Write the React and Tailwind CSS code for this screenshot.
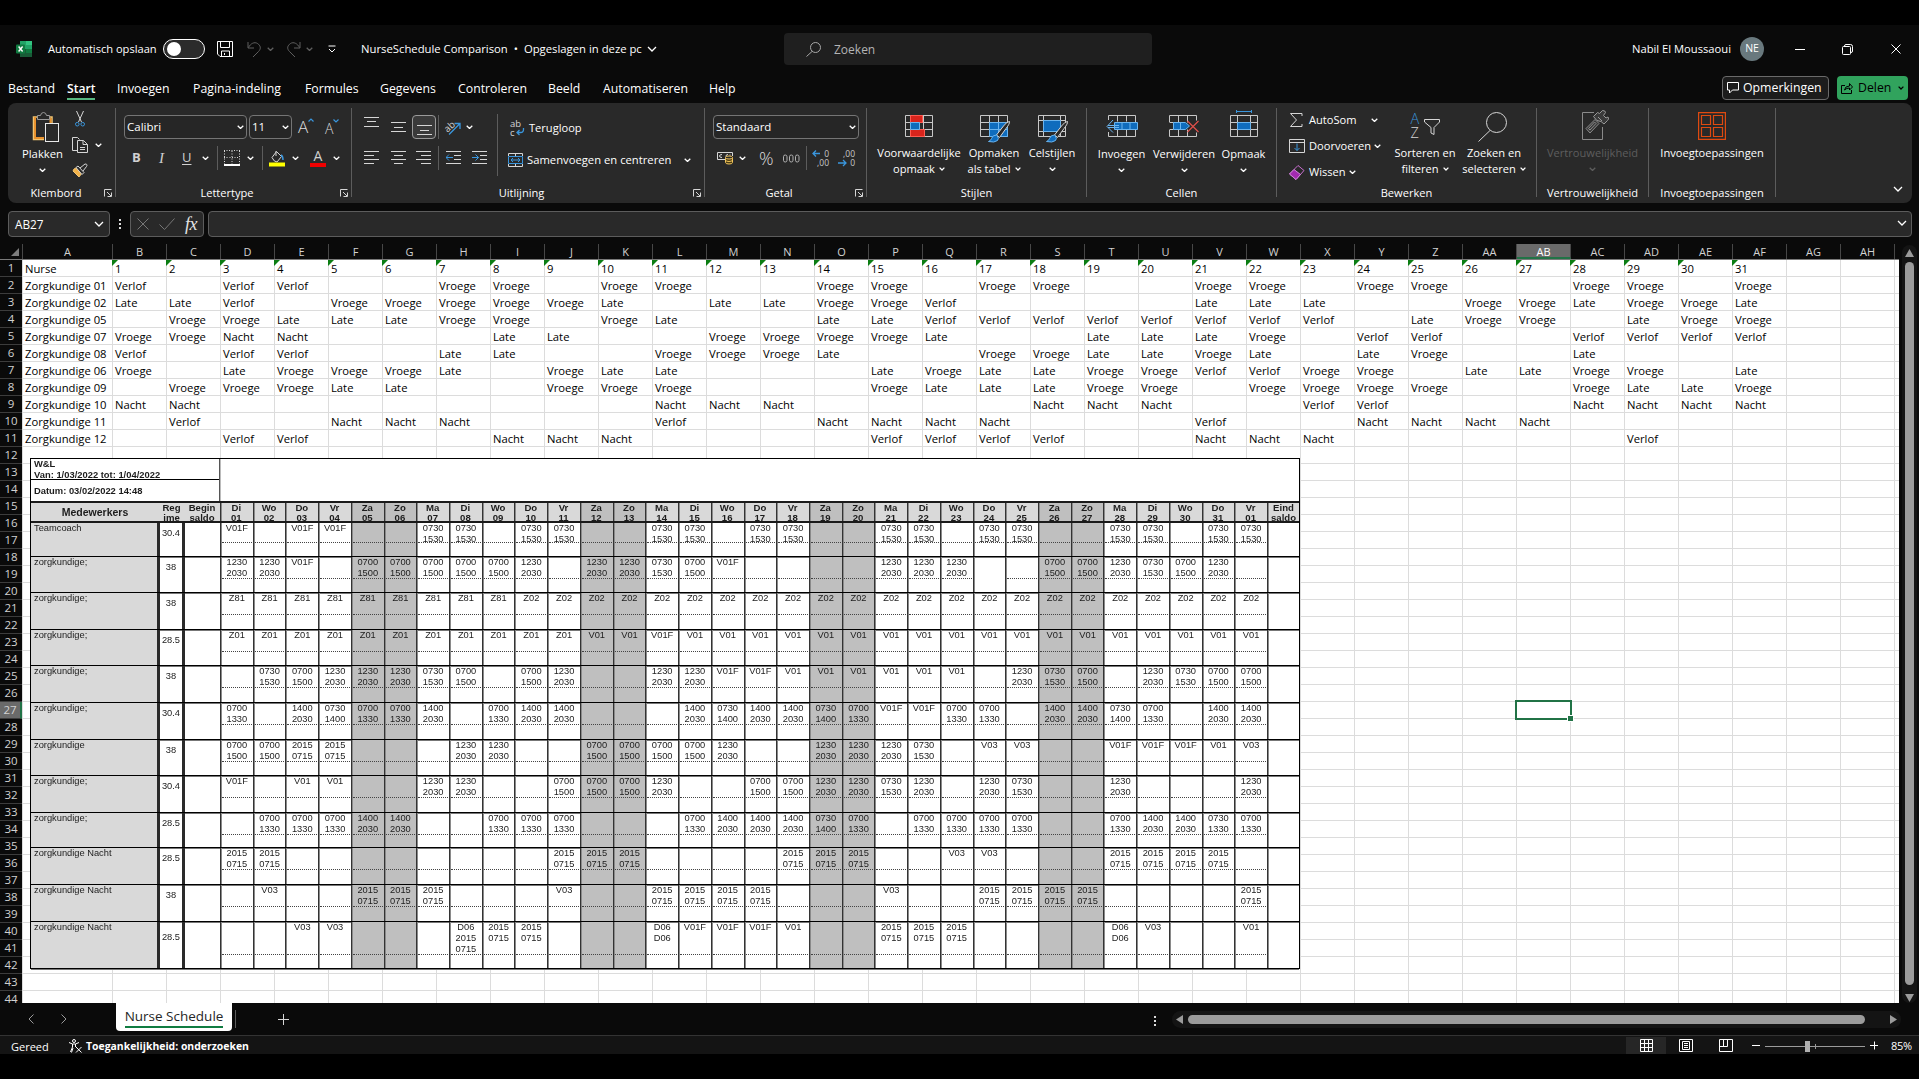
import React from "react";

/* ---------- data ---------- */

const WORDS = { V: "Vroege", F: "Verlof", L: "Late", N: "Nacht" };

const NURSES = [
  ["Zorgkundige 01", "F.FF..VV.VV..VV.VV..VV.VV..VV.V"],
  ["Zorgkundige 02", "LLF.VVVVVL.LLVVF....LLL..VVLVVL"],
  ["Zorgkundige 05", ".VVLLLVV.VL..LLFFFFFFFF.LVV.LVV"],
  ["Zorgkundige 07", "VVNN...LL..VVVVL..LLLV.FF..FFFF"],
  ["Zorgkundige 08", "F.FF..LL..VVVL..VVLLVL.LV..L..."],
  ["Zorgkundige 06", "V.LVVVL.VLL...LVLLVVFFVV.LLVV.L"],
  ["Zorgkundige 09", ".VVVLL..VVV...VLLLVV.VVVV..VLLV"],
  ["Zorgkundige 10", "NN........NNN....NNN..FF...NNNN"],
  ["Zorgkundige 11", ".F..NNN...F..NNNN...F..NNNN...."],
  ["Zorgkundige 12", "..FF...NNN....FFFF..NNN.....F.."],
];

const COLS = [
  ..."BCDEFGHIJKLMNOPQRSTUVWXYZ".split(""),
  "AA", "AB", "AC", "AD", "AE", "AF", "AG", "AH",
];

const SHIFT = {
  a: ["0730", "1530"],
  b: ["1230", "2030"],
  c: ["0700", "1500"],
  d: ["0700", "1330"],
  e: ["1400", "2030"],
  f: ["0730", "1400"],
  g: ["0730", "1330"],
  n: ["2015", "0715"],
  D: ["D06", "D06"],
  E: ["D06", "2015", "0715"],
  8: ["Z81"],
  2: ["Z02"],
  1: ["Z01"],
  v: ["V01"],
  F: ["V01F"],
  3: ["V03"],
};

const PLAN = [
  ["Teamcoach", "30.4", "F.FF..aa.aa..aa.aa..aa.aa..aa.aa"],
  ["zorgkundige;", "38", "bbF.cccccb.bbacF....bbb..ccbacb."],
  ["zorgkundige;", "38", "88888888822222222222222222222222"],
  ["zorgkundige;", "28.5", "11111111111vvFvvvvvvvvvvvvvvvvvv"],
  ["zorgkundige;", "38", ".acbbbac.cb..bbFFvvvvvv.bac.bacc"],
  ["zorgkundige;", "30.4", "d.efdde.dee...efeefdFFdd.eefd.ee"],
  ["zorgkundige", "38", "ccnn...bb..ccccb..bbba.33..FFFv3"],
  ["zorgkundige;", "30.4", "F.vv..bb..cccb..ccbbab.ba..b...b"],
  ["zorgkundige;", "28.5", ".dddee..ddd...deeefd.dddd..deegd"],
  ["zorgkundige Nacht", "28.5", "nn........nnn....nnn..33...nnnn."],
  ["zorgkundige Nacht", "38", ".3..nnn...3..nnnn...3..nnnn....n"],
  ["zorgkundige Nacht", "28.5", "..33...Enn...DFFFv..nnn....D3..v"],
];

const DAY_NAMES = ["Di", "Wo", "Do", "Vr", "Za", "Zo", "Ma"];
const DAYS = Array.from({ length: 32 }, (_, i) => ({
  name: DAY_NAMES[i % 7],
  num: String(i === 31 ? 1 : i + 1).padStart(2, "0"),
  weekend: i % 7 === 4 || i % 7 === 5,
}));

/* ---------- small parts ---------- */

const Chev = ({ className = "", size = 7, w = 1.3 }) => (
  <svg width={size} height={size * 0.6} viewBox="0 0 10 6" className={"shrink-0 " + className} fill="none" stroke="currentColor" strokeWidth={(w * 10) / size}>
    <path d="M1 1l4 4 4-4" />
  </svg>
);

const Icon = ({ w, h, children, className = "", sw = 1 }) => (
  <svg width={w} height={h} viewBox={`0 0 ${w} ${h}`} className={"shrink-0 " + className} fill="none" stroke="#d6d6d6" strokeWidth={sw}>
    {children}
  </svg>
);

const Launcher = () => (
  <Icon w={8} h={8} className="mr-[3px]">
    <path d="M.5 7.5V.5h7M3 3l4 4M7.5 3.5v4h-4" />
  </Icon>
);

const Sep = ({ className = "" }) => <div className={"w-px shrink-0 bg-[#5c5c5c] " + className} />;

function Group({ label, launcher, width, children }) {
  return (
    <>
      <section className={"flex h-full shrink-0 flex-col " + width}>
        <div className="h-[81px]">{children}</div>
        <div className="flex h-[18px] items-center">
          <span className={"flex-1 text-center whitespace-nowrap " + (launcher === "pad" ? "pr-0.5" : "")}>{label}</span>
          {launcher && <Launcher />}
        </div>
      </section>
      <Sep className="mt-[5px] h-[89px]" />
    </>
  );
}

function BigButton({ icon, lines, width, chevron, inline, className = "", top = "h-[42px]" }) {
  return (
    <div className={"flex shrink-0 flex-col items-center whitespace-nowrap " + width + " " + className}>
      <div className={"flex items-start justify-center " + top}>{icon}</div>
      {lines.map((l, i) => (
        <div key={l} className="flex h-4 items-center gap-1 leading-4">
          {l}
          {inline && i === lines.length - 1 && <Chev size={6} />}
        </div>
      ))}
      {chevron && <div className="flex h-4 items-center"><Chev /></div>}
    </div>
  );
}

/* ---------- top chrome ---------- */

function TitleBar() {
  return (
    <header className="flex h-12 shrink-0 items-center">
      <svg width="16" height="16" viewBox="0 0 16 16" className="ml-4 shrink-0">
        <path d="M4 0h6v8H4z" fill="#21a366" />
        <path d="M10 0h6v4h-6z" fill="#33c481" />
        <path d="M10 4h6v4h-6z" fill="#21a366" />
        <path d="M10 8h6v4h-6z" fill="#107c41" />
        <path d="M4 8h6v4H4z" fill="#185c37" />
        <path d="M4 12h12v4H4z" fill="#185c37" />
        <rect y="3.500" width="9" height="9" rx="1" fill="#107c41" />
        <path d="M2.600 5.500l4 5M6.600 5.500l-4 5" stroke="#fff" strokeWidth="1.400" />
      </svg>
      <span className="ml-4 w-[115px] shrink-0 whitespace-nowrap text-[11.1px]">Automatisch opslaan</span>
      <div className="flex h-5 w-[42px] shrink-0 items-center rounded-full border border-white bg-[#2b2b2b] pl-[3px]">
        <div className="size-[14px] rounded-full bg-white" />
      </div>
      <Icon w={16} h={16} className="ml-3">
        <path stroke="#fff" d="M.5.500h15v15h-12.500l-2.500-2.500zM3.500.500v6h9v-6M4.500 15.500v-5.500h8v5.500M7.500 12v2" />
      </Icon>
      <Icon w={15} h={17} className="ml-3.5">
        <path stroke="#5f5f5f" d="M1 1v6h6M1.500 6.500c2-4 6-6 9-4s4 5 1 8l-5.500 5.500" />
      </Icon>
      <Chev className="ml-[5px] text-[#5f5f5f]" />
      <Icon w={15} h={17} className="ml-3">
        <path stroke="#5f5f5f" d="M14 1v6H8M13.500 6.500c-2-4-6-6-9-4s-4 5-1 8l5.500 5.500" />
      </Icon>
      <Chev className="ml-[5px] text-[#5f5f5f]" />
      <Icon w={8} h={8} className="ml-[15px]"><path stroke="#fff" d="M.500 1h7M1 4l3 3 3-3" /></Icon>
      <span className="ml-[25px] w-[286px] shrink-0 whitespace-nowrap text-[11.300px]">
        NurseSchedule Comparison <span className="mx-[3px]">•</span> Opgeslagen in deze pc
      </span>
      <Chev size={10} />
      <div className="ml-[127px] flex h-8 w-[368px] shrink-0 items-center rounded bg-[#1f1f1f]">
        <Icon w={15} h={15} className="ml-[22px]"><circle cx="9.500" cy="5.500" r="5" stroke="#a8a8a8" /><path stroke="#a8a8a8" d="M6 9.500l-5.500 5" /></Icon>
        <span className="ml-[13px] pt-px text-[12px] text-[#b4b4b4]">Zoeken</span>
      </div>
      <span className="ml-auto whitespace-nowrap text-[11.2px]">Nabil El Moussaoui</span>
      <div className="ml-[9px] flex size-6 items-center justify-center rounded-full bg-[#69797e] text-[10.5px]">NE</div>
      <Icon w={10} h={10} className="ml-[31px]"><path stroke="#fff" d="M0 5.500h10" /></Icon>
      <Icon w={11} h={11} className="ml-[37px]"><path stroke="#fff" d="M2.500 2.500V2Q2.500.500 4 .500h4.500q2 0 2 2v4.500q0 1.500-1.500 1.500" /><rect x=".5" y="2.500" width="8" height="8" rx="1" stroke="#fff" /></Icon>
      <Icon w={10} h={10} className="mr-[18px] ml-[38px]"><path stroke="#fff" d="M.500.500l9 9M9.500.500l-9 9" /></Icon>
    </header>
  );
}

const TABS = [
  ["Bestand", "w-[59px]"],
  ["Start", "w-[50px]"],
  ["Invoegen", "w-[76px]"],
  ["Pagina-indeling", "w-[112px]"],
  ["Formules", "w-[75px]"],
  ["Gegevens", "w-[78px]"],
  ["Controleren", "w-[90px]"],
  ["Beeld", "w-[55px]"],
  ["Automatiseren", "w-[106px]"],
  ["Help", "w-[40px]"],
];

function Tabs() {
  return (
    <nav className="flex h-[30px] shrink-0 items-start pl-2 text-[12.3px]">
      {TABS.map(([t, w]) => (
        <div key={t} className={"shrink-0 whitespace-nowrap " + w}>
          <span className={"inline-block pt-[6px] leading-[19px] " + (t === "Start" ? "border-b-2 border-[#57b881] text-[12.1px] font-semibold" : "")}>{t}</span>
        </div>
      ))}
      <div className="mt-[3px] ml-auto flex h-6 w-[107px] items-center rounded border border-[#6a6a6a] bg-[#1c1c1c] pl-1">
        <Icon w={12} h={12}><path stroke="#fff" d="M.500.500h11v7.500h-6l-3 3v-3h-2z" /></Icon>
        <span className="ml-1 pt-px whitespace-nowrap">Opmerkingen</span>
      </div>
      <div className="mt-[3px] mr-[11px] ml-2 flex h-6 w-[71px] items-center rounded bg-[#31a35d] pl-1 text-black">
        <Icon w={12} h={12}><path stroke="#000" d="M4 3.500H.500v8h10V8M3.500 8q.5-4 5-4v-2.500l3 3.500-3 3V6q-3 0-5 2z" /></Icon>
        <span className="ml-[5px] pt-px">Delen</span>
        <Chev size={6} className="ml-[7px]" />
      </div>
    </nav>
  );
}

const Dropdown = ({ text, className }) => (
  <div className={"flex h-6 shrink-0 items-center justify-between rounded border border-[#757575] bg-[#262626] pr-[2px] pl-[2px] text-[11.5px] " + className}>
    {text}
    <Chev />
  </div>
);

const TableGrid = ({ children }) => (
  <>
    <path stroke="#c8c8c8" d="M.500.500h27v21H.500zM.500 7.500h27M.500 14.500h27M9.500.500v21M18.500.500v21" />
    {children}
  </>
);

const Brush = () => (
  <>
    <path d="M29.500 6.500q-2.500 0-6 4.500l-7 9 3 2.500 6.500-9q4-5 3.500-7z" stroke="#d6d6d6" fill="#292929" />
    <path d="M16.500 20q-4 0-5 3.500-.5 2-3 3 6 1.500 9-1 2-2-.5-5z" stroke="#6ab4ee" fill="#0f6cbd" />
  </>
);

function Ribbon() {
  return (
    <div className="mx-2 flex h-[100px] w-[1904px] shrink-0 rounded-lg bg-[#292929] text-[11.1px]">
      <Group label="Klembord" launcher="plain" width="w-[107px]">
        <div className="flex h-full">
          <BigButton
            width="w-[69px]"
            className="pt-[9px] text-[11.3px]"
            top="h-[34px]"
            chevron
            lines={["Plakken"]}
            icon={
              <Icon w={27} h={31} className="ml-[5px]">
                <path d="M5.500 5H1.500v22.500H12M17 5h3v6" stroke="#f2c572" strokeWidth="1.500" />
                <path d="M3 5v21h9M18.500 6v5" stroke="#e8912d" strokeWidth="2" />
                <path d="M5.500 3.500h3q.5-3 3-3t3 3h3v4h-12z" fill="#292929" stroke="#9a9a9a" />
                <rect x="13.500" y="11.500" width="13" height="18" fill="#292929" stroke="#e8e8e8" />
              </Icon>
            }
          />
          <div className="flex flex-col pt-2">
            <Icon w={10} h={16} className="ml-[-2px]">
              <path d="M1.500 0l5 11M8.500 0l-5 11" />
              <circle cx="2.300" cy="13.200" r="1.800" stroke="#3a96dd" /><circle cx="7.700" cy="13.200" r="1.800" stroke="#3a96dd" />
            </Icon>
            <div className="mt-[10px] ml-[-5px] flex items-center">
              <Icon w={17} h={16}><path d="M5 13.500H.500V.500h5l2 2M5.500 3.500h6l4 4v8h-10zM11 3.500v4h4.500M8 10.500h5M8 12.500h5" /></Icon>
              <Chev className="ml-[6px]" />
            </div>
            <Icon w={16} h={15} className="mt-[10px] ml-[-5px]">
              <path d="M2 6l-1 2 6 6 3-4-6-5z" fill="#f2b24a" stroke="#f2c572" />
              <path d="M4 4.500l2-1.500 6 6.500-2 2zM8 5l5-4q3 0 1.500 2.500L11 8" fill="#292929" />
            </Icon>
          </div>
        </div>
      </Group>

      <Group label="Lettertype" launcher="pad" width="w-[235px]">
        <div className="flex h-6 items-center pl-2 mt-3">
          <Dropdown text="Calibri" className="w-[123px]" />
          <Dropdown text="11" className="ml-[2px] w-[43px]" />
          <div className="ml-[6px] flex w-[27px] items-start text-[17px] leading-5 font-light text-[#dcdcdc]">
            A<svg width="6" height="4" className="mt-[1px]" fill="none" stroke="#3a96dd" strokeWidth="1.200"><path d="M.500 3.500l2.500-2.500 2.500 2.500" /></svg>
          </div>
          <div className="flex items-start pt-[3px] text-[14px] leading-[17px] font-light text-[#dcdcdc]">
            A<svg width="6" height="4" className="mt-[-1px]" fill="none" stroke="#3a96dd" strokeWidth="1.200"><path d="M.500.500l2.500 2.500 2.500-2.500" /></svg>
          </div>
        </div>
        <div className="mt-[7px] flex h-6 items-center pl-[14px] text-[13px] text-[#d0d0d0]">
          <span className="w-[25px] pl-0.5 font-bold">B</span>
          <span className="w-[26px] pl-1 font-['Liberation_Serif'] text-[15px] italic">I</span>
          <span className="w-[21px] pl-px underline underline-offset-2">U</span>
          <Chev className="text-white" />
          <Sep className="ml-2 h-6" />
          <Icon w={16} h={16} className="ml-1.5">
            <path d="M.500 1v13M5.500 7.500h10M0 .500h16M15.500 1v13M8 1v13M0 7.500h5" strokeDasharray="1 1.500" />
            <path d="M0 15h16" stroke="#fff" strokeWidth="2" />
          </Icon>
          <Chev className="ml-[7px] text-white" />
          <Sep className="ml-2 h-6" />
          <Icon w={17} h={17} className="ml-1.5">
            <path d="M3 7.500l4.500-6 5 5-4.500 5.500q-3 0-5-4.500zM7 1v5" />
            <path d="M12 5q2 1 2 5" stroke="#3a96dd" strokeWidth="1.500" />
            <path d="M0 14.500h16" stroke="#ff0" strokeWidth="4" />
          </Icon>
          <Chev className="ml-[6px] text-white" />
          <div className="ml-[11px] flex w-4 flex-col items-center">
            <span className="h-[12px] text-[14px] leading-[12px]">A</span>
            <div className="mt-[1px] h-1 w-4 bg-[#f00000]" />
          </div>
          <Chev className="ml-[7px] text-white" />
        </div>
      </Group>

      <Group label="Uitlijning" launcher="pad" width="w-[352px]">
        <div className="flex h-full">
          <div className="w-[145px]">
            <div className="mt-3 flex h-6 items-center pl-3">
              <Icon w={15} h={12} className="mt-[-8px]"><path d="M0 .500h15M3 4.500h9M0 9.500h15" /></Icon>
              <Icon w={15} h={12} className="ml-3"><path d="M0 1.500h15M3 6.500h9M0 10.500h15" /></Icon>
              <div className="ml-[6px] flex h-6 w-6 items-end justify-center rounded border border-[#9a9a9a] bg-[#3a3a3a] pb-0.5">
                <Icon w={15} h={11}><path d="M0 .500h15M3 5.500h9M0 9.500h15" /></Icon>
              </div>
              <Sep className="ml-[2px] h-6" />
              <div className="ml-[5px] flex items-center">
                <svg width="18" height="18" viewBox="0 0 18 18" fill="none" className="overflow-visible">
                  <text x="1" y="12" fontSize="9.500" fill="#d6d6d6" transform="rotate(-42 6 10)">ab</text>
                  <path d="M5 16.500L15.500 6M10.500 5.500h5.500v5.500" stroke="#3a96dd" strokeWidth="1.300" />
                </svg>
              </div>
              <Chev className="ml-1" />
            </div>
            <div className="mt-[7px] flex h-6 items-center pl-3">
              <Icon w={15} h={14}><path d="M0 .500h15M0 4.500h10M0 8.500h15M0 12.500h10" /></Icon>
              <Icon w={15} h={14} className="ml-3"><path d="M0 .500h15M3 4.500h9M0 8.500h15M3 12.500h9" /></Icon>
              <Icon w={15} h={14} className="ml-[10px]"><path d="M0 .500h15M5 4.500h10M0 8.500h15M5 12.500h10" /></Icon>
              <Sep className="ml-[7px] h-6" />
              <Icon w={15} h={14} className="ml-[7px]"><path d="M0 .500h15M8 4.500h7M8 8.500h7M0 12.500h15" /><path stroke="#3a96dd" d="M7 6.500H0M3 3.500l-3 3 3 3" /></Icon>
              <Icon w={15} h={14} className="ml-[11px]"><path d="M0 .500h15M8 4.500h7M8 8.500h7M0 12.500h15" /><path stroke="#3a96dd" d="M0 6.500h6.500M3.500 3.500l3 3-3 3" /></Icon>
            </div>
          </div>
          <Sep className="mt-[11px] h-[62px]" />
          <div className="pt-[15px] pl-[10px]">
            <div className="flex h-5 items-center">
              <div className="relative mr-[4px] flex h-[18px] w-[17px] flex-col pl-0.5 text-[9.5px] leading-[9px] text-[#d6d6d6]">
                <span>ab</span>
                <span>c</span>
                <svg width="9" height="9" className="absolute right-0 bottom-0" fill="none" stroke="#3a96dd" strokeWidth="1.300"><path d="M7.500 0v1.500q0 3-3 3H1M3.500 2L1 4.500 3.500 7" /></svg>
              </div>
              Terugloop
            </div>
            <div className="mt-[12px] flex h-5 items-center">
              <Icon w={15} h={14} className="mr-[4px]">
                <path d="M.500 3V.500h14V3M.500 11v2.500h14V11M7.500.500v3M7.500 10.500v3" />
                <path stroke="#3a96dd" d="M.500 3.500h14v7H.500zM3 7h9M5 5L3 7l2 2M10 5l2 2-2 2" />
              </Icon>
              <span className="w-[157px] whitespace-nowrap text-[11.250px]">Samenvoegen en centreren</span>
              <Chev />
            </div>
          </div>
        </div>
      </Group>

      <Group label="Getal" launcher="pad" width="w-[161px]">
        <Dropdown text="Standaard" className="mt-3 ml-2 w-[146px]" />
        <div className="mt-[7px] flex h-6 items-center pl-3">
          <Icon w={17} h={14}>
            <path d="M8 8.500H.500v-7h15V5M5 3.500q-2.500 0-2.500 1.500t2.500 1.500M11 3.500q-2 0-2 1.500t1 1.500M13 3.500v1" />
            <path d="M8.500 6.500v5q0 1.500 3.500 1.500t3.500-1.500v-5" fill="#4d3d12" stroke="#f2c55c" />
            <ellipse cx="12" cy="6.500" rx="3.500" ry="1.500" stroke="#f2c55c" fill="#292929" />
            <path d="M8.500 9q0 1.500 3.500 1.500t3.500-1.500" stroke="#f2c55c" />
          </Icon>
          <Chev className="ml-[5px]" />
          <span className="ml-[13px] w-[24px] text-[18px] leading-6 font-light text-[#dcdcdc]">%</span>
          <Icon w={17} h={9} className="text-[#a8a8a8]">
            {[0, 6, 12].map((x) => <rect key={x} x={x + 0.5} y="1" width="3.500" height="7" rx="1.700" stroke="#b0b0b0" />)}
          </Icon>
          <Sep className="ml-[6px] h-6" />
          <div className="relative ml-[5px] flex h-[18px] w-[17px] flex-col items-end text-[8.5px] leading-[9px] text-[#c8c8c8]">
            <span>0</span>
            <span>,00</span>
            <svg width="9" height="8" className="absolute top-0 left-0" fill="none" stroke="#3a96dd" strokeWidth="1.300"><path d="M8 4.500H1M4 1.500l-3 3 3 3" /></svg>
          </div>
          <div className="relative ml-[9px] flex h-[18px] w-[17px] flex-col items-end text-[8.5px] leading-[9px] text-[#c8c8c8]">
            <span>,00</span>
            <span>0</span>
            <svg width="9" height="8" className="absolute bottom-0 left-0" fill="none" stroke="#3a96dd" strokeWidth="1.300"><path d="M0 4h8M5 1l3 3-3 3" /></svg>
          </div>
        </div>
      </Group>

      <Group label="Stijlen" width="w-[219px]">
        <div className="flex h-full pt-3">
          <BigButton width="w-[104px]" top="h-[30px]" inline lines={["Voorwaardelijke", "opmaak"]} icon={
            <Icon w={28} h={22}><TableGrid>
              <path d="M5.500.500h12v7h-12zM5.500 14.500h14v7h-14z" fill="#d9241c" stroke="#ff5a50" />
              <path d="M5.500 7.500h9v7h-9z" fill="#0f6cbd" stroke="#6ab4ee" />
            </TableGrid></Icon>} />
          <BigButton width="w-[46px]" top="h-[30px]" inline lines={["Opmaken", "als tabel"]} icon={
            <Icon w={31} h={28} className="ml-0.5"><TableGrid>
              <path d="M9.500 7.500h18v14h-18z" fill="#0f6cbd" stroke="#6ab4ee" />
              <path d="M9.500 14.500h18M18.500 7.500v14" stroke="#6ab4ee" />
            </TableGrid><Brush /></Icon>} />
          <BigButton width="w-[70px]" top="h-[30px]" chevron lines={["Celstijlen"]} icon={
            <Icon w={31} h={28} className="ml-0.5"><path stroke="#c8c8c8" d="M.500.500h27v21H.500zM.500 5.500h27M.500 16.500h27M5.500.500v21M22.500.500v21" />
              <path d="M5.500 5.500h17v11h-17z" fill="#0f6cbd" stroke="#6ab4ee" /><Brush /></Icon>} />
        </div>
      </Group>

      <Group label="Cellen" width="w-[189px]">
        <div className="flex h-full pt-[7px]">
          <BigButton width="w-[69px]" top="h-9" chevron lines={["Invoegen"]} icon={
            <Icon w={32} h={27}>
              <path stroke="#c8c8c8" d="M2.500 10V5.500h27v21h-27V22M11.500 5.500v6M20.500 5.500v6M11.500 19.500v7M20.500 19.500v7" />
              <path d="M8.500 12.500h23v7h-23z" fill="#0f6cbd" stroke="#6ab4ee" /><path d="M16 12.500v7M24 12.500v7M13 15.500H2M13 17.500H2M7 10l-6 6.500 6 6" stroke="#6ab4ee" />
            </Icon>} />
          <BigButton width="w-[56px]" top="h-9" chevron lines={["Verwijderen"]} icon={
            <Icon w={30} h={27}>
              <path stroke="#c8c8c8" d="M.500 12V5.500h27v5M.500 20v6.500h27v-4M9.500 5.500v7M18.500 5.500v7M9.500 19.500v7M18.500 19.500v7M.500 12.500h4M.500 19.500h4" />
              <path d="M4.500 12.500h12l4 3.500-4 3.500h-12z" fill="#0f6cbd" stroke="#6ab4ee" /><path d="M11.500 12.500v7" stroke="#6ab4ee" /><path d="M18.500 11l11 11M29.500 11l-11 11" stroke="#e0504a" strokeWidth="1.200" />
            </Icon>} />
          <BigButton width="w-[63px]" top="h-9" chevron lines={["Opmaak"]} icon={
            <Icon w={28} h={27}>
              <g transform="translate(0 5)"><path stroke="#c8c8c8" d="M.500.500h27v21H.500zM.500 7.500h27M.500 14.500h27M7.500.500v21M20.500.500v21" /><path d="M7.500 7.500h13v7h-13z" fill="#0f6cbd" stroke="#6ab4ee" /></g>
              <path d="M6.500 0v3M21.500 0v3M6.500 1.500h15" stroke="#3a96dd" />
            </Icon>} />
        </div>
      </Group>

      <Group label="Bewerken" width="w-[259px]">
        <div className="flex h-full">
          <div className="flex w-[114px] flex-col gap-[6px] pt-[7px] pl-3 whitespace-nowrap">
            <div className="flex h-5 items-center"><Icon w={15} h={14} className="mr-[5px]"><path d="M13 3V.500H1.500L7.500 7l-6 6.500H13V11" /></Icon><span className="w-[62px]">AutoSom</span><Chev /></div>
            <div className="flex h-5 items-center"><Icon w={16} h={14} className="mr-[4px]"><path d="M.500.500h15v13H.500zM.500 3.500h15" /><path d="M8 4.500v7M5.500 9L8 11.500 10.500 9" stroke="#3a96dd" /></Icon><span className="w-[65px]">Doorvoeren</span><Chev /></div>
            <div className="flex h-5 items-center"><Icon w={16} h={15} className="mr-[4px]"><path d="M.500 9L9 .500l6 5L7 14.500z" stroke="#c86fd0" /><path d="M.500 9L5 4.500l6.500 5-4.500 5z" fill="#a32bb0" stroke="#d08ad8" /></Icon><span className="w-[40px]">Wissen</span><Chev /></div>
          </div>
          <BigButton width="w-[68px]" className="pt-[9px]" top="h-[33px]" inline lines={["Sorteren en", "filteren"]} icon={
            <div className="flex h-[30px] items-start">
              <div className="flex w-[13px] flex-col items-start text-[14.500px] leading-[14px] font-light">
                <span className="text-[#3a96dd]">A</span>
                <span className="text-[#d6d6d6]">Z</span>
              </div>
              <Icon w={16} h={17} className="mt-[7px]"><path d="M.500.500h15V3L10 8.500v7L7 14V8.500L.500 3z" /></Icon>
            </div>} />
          <BigButton width="w-[70px]" className="pt-[9px]" top="h-[33px]" inline lines={["Zoeken en", "selecteren"]} icon={
            <Icon w={29} h={30} className="mr-1"><circle cx="18.500" cy="10.500" r="10" /><path d="M12 18.500L.500 29.500" /></Icon>} />
        </div>
      </Group>

      <Group label="Vertrouwelijkheid" width="w-[111px]">
        <BigButton width="w-[111px]" className="pt-[7px] text-[#5e5e5e]" top="h-[35px]" chevron lines={["Vertrouwelijkheid"]} icon={
          <Icon w={27} h={31} className="ml-1.5">
            <path stroke="#8a8a8a" d="M12 2.500H.500v27h20V17" />
            <path stroke="#8a8a8a" fill="#3a3a3a" d="M4 18.500l9-9 4 4-9 9.500zM6.500 18.500l6-6.500 1.500 1.500-6 6.500z" />
            <path stroke="#9a9a9a" fill="#3a3a3a" d="M11.500 6.500l4-4 2 1 3-3q3 0 3 2l-2 3 2.500 2.500 2-1q1.500 2-.5 3.500l-3.500 3.500-3-2.500q-4.500.5-7.500-5zM16 7l4 4" />
          </Icon>} />
      </Group>

      <Group label="Invoegtoepassingen" width="w-[126px]">
        <BigButton width="w-[126px]" className="pt-[9px]" top="h-[33px]" lines={["Invoegtoepassingen"]} icon={
          <Icon w={28} h={28}><path stroke="#e04a10" strokeWidth="1.200" d="M.600.600h26.800v26.800H.600zM3.500 3.500h9v9h-9zM15.500 3.500h9v9h-9zM3.500 15.500h9v9h-9zM15.500 15.500h9v9h-9z" /></Icon>} />
      </Group>
      <div className="flex flex-1 items-end justify-end pr-[9px] pb-[11px]"><Chev size={10} /></div>
    </div>
  );
}

function FormulaBar() {
  return (
    <div className="mx-2 mt-2 flex h-[26px] w-[1904px] shrink-0 items-center">
      <div className="flex h-full w-[102px] shrink-0 items-center justify-between rounded border border-[#5c5c5c] bg-[#292929] pr-[5px] pl-1.5 text-[11.8px]">
        <span className="pt-px">AB27</span> <Chev size={10} />
      </div>
      <div className="ml-[9px] flex flex-col gap-[2px]">
        {[0, 1, 2].map((i) => <div key={i} className="size-[2px] bg-[#dcdcdc]" />)}
      </div>
      <div className="ml-[9px] flex h-full w-[74px] shrink-0 items-center rounded border border-[#5c5c5c] bg-[#292929] pl-1.5">
        <Icon w={12} h={12}><path stroke="#777" d="M.500.500l11 11M11.500.500l-11 11" /></Icon>
        <Icon w={16} h={12} className="ml-[10px]"><path stroke="#777" d="M.500 6.500l5 5L15.500.500" /></Icon>
        <span className="ml-[10px] font-['Liberation_Serif'] text-[18px] leading-6 tracking-tight text-[#e4e4e4] italic">fx</span>
      </div>
      <div className="ml-1 flex h-full flex-1 items-start justify-end rounded border border-[#5c5c5c] bg-[#292929] pt-[8px] pr-1">
        <Chev size={10} />
      </div>
    </div>
  );
}

/* ---------- sheet ---------- */

function SheetRow({ n }) {
  const nurse = n > 1 ? NURSES[n - 2] : null;
  const first = n === 1 ? "Nurse" : nurse ? nurse[0] : "";
  return (
    <div className="flex h-[17px] shrink-0">
      <div className={"flex w-[22px] shrink-0 items-center justify-center border-b border-[#3c3c3c] text-[11.5px] leading-4 text-[#d2d2d2] " + (n === 27 ? "border-r-2 border-r-[#217346] bg-[#6a6a6a]" : "bg-[#0a0a0a]")}>{n}</div>
      <div className="w-[91px] shrink-0 border-r border-b border-l border-[#dcdcdc] pl-[2px] leading-[17px] whitespace-nowrap">{first}</div>
      {COLS.map((c, i) => (
        <div key={c} className="relative w-[54px] shrink-0 border-r border-b border-[#dcdcdc] pl-[2px] leading-[17px]">
          {n === 1 && i < 31 && <svg width="6" height="6" className="absolute top-0 -left-px"><path d="M0 0h6L0 6z" fill="#0b7d12" /></svg>}
          {n === 1 && i < 31 ? i + 1 : nurse ? WORDS[nurse[1][i]] : ""}
        </div>
      ))}
      <div className="flex-1 border-b border-[#dcdcdc]" />
    </div>
  );
}

const ROW_H = [
  "h-[34px]", "h-[36px]", "h-[37px]", "h-[36px]", "h-[37px]", "h-[37px]",
  "h-[36px]", "h-[37px]", "h-[35px]", "h-[37px]", "h-[37px]", "h-[47px]",
];

const DAY_GRID = "grid grid-cols-[repeat(32,32.720px)]";

function PlanPicture() {
  return (
    <div className="absolute top-[214px] left-[30px] h-[511px] w-[1270px] border border-black bg-white font-['Liberation_Sans'] text-[9.3px] text-[#1c1c1c] blur-[0.3px]">
      <div className="flex h-[42px] leading-[11px] font-bold">
        <div className="flex w-[189px] shrink-0 flex-col border-r border-[#555] shadow-[1px_0_0_#bbb]">
          <div className="h-[21px] border-b border-black pl-[3px] text-[9.4px] leading-[10.500px] whitespace-nowrap">W&amp;L<br />Van: 1/03/2022 tot: 1/04/2022</div>
          <div className="pt-[5px] pl-[3px] text-[9.4px]">Datum: 03/02/2022 14:48</div>
        </div>
      </div>
      <div className="flex h-[22px] border-y-2 border-[#1a1a1a] bg-[#d9d9d9] text-center text-[9.6px] leading-[9.500px] font-bold">
        <div className="w-[128px] shrink-0 text-[10.5px] leading-[19px]">Medewerkers</div>
        <div className="w-[25px] shrink-0">Reg<br />ime</div>
        <div className="w-[36px] shrink-0">Begin<br />saldo</div>
        <div className={DAY_GRID}>
          {DAYS.map((d, i) => (
            <div key={i} className={"h-[18px] border-l border-[#333] pr-px shadow-[inset_1px_0_0_#8a8a8a] " + (d.weekend ? "bg-[#bfbfbf]" : "")}>{d.name}<br />{d.num}</div>
          ))}
        </div>
        <div className="flex-1 border-l border-[#333] shadow-[inset_1px_0_0_#8a8a8a]">Eind<br />saldo</div>
      </div>
      {PLAN.map(([name, reg, codes], r) => (
        <div key={r} className={"flex border-b border-black leading-[10.800px] shadow-[0_1px_0_#777] " + ROW_H[r]}>
          <div className="w-[129px] shrink-0 border-r-3 border-[#2a2a2a] bg-[#d9d9d9] pl-[3px]">{name}</div>
          <div className={"flex w-[25px] shrink-0 justify-center border-r-3 border-[#2a2a2a] " + (r === 11 ? "pt-[10px]" : "pt-[5px]")}>{reg}</div>
          <div className="w-[35px] shrink-0" />
          <div className={DAY_GRID}>
            {DAYS.map((d, i) => (
              <div key={i} className={"border-l border-[#333] text-center shadow-[inset_1px_0_0_#8a8a8a] " + (d.weekend ? "bg-[#bfbfbf]" : "")}>
                <div className={"mx-px border-[#444] " + (r === 0 ? "h-[20px] " : r === 11 ? "h-[33px] " : "h-[22px] ") + (r === 1 && i === 23 ? "" : "border-b border-dotted")}>
                  {(SHIFT[codes[i]] || []).map((t, k) => <div key={k}>{t}</div>)}
                </div>
              </div>
            ))}
          </div>
          <div className="flex-1 border-l border-[#333] shadow-[inset_1px_0_0_#8a8a8a]" />
        </div>
      ))}
    </div>
  );
}

function Sheet() {
  return (
    <div className="mt-[7px] flex h-[759px] shrink-0">
      <div className="relative flex w-[1899px] shrink-0 flex-col overflow-hidden">
        <div className="flex h-4 shrink-0 border-b border-[#7a7a7a] bg-[#0a0a0a] text-[11px] leading-[15px] text-[#d2d2d2]">
          <div className="flex w-[22px] shrink-0 items-center justify-end pr-[3px]"><svg width="8" height="8"><path d="M8 0v8H0z" fill="#7d7d7d" /></svg></div>
          <div className="w-[91px] shrink-0 border-x border-[#474747] text-center">A</div>
          {COLS.map((c) => (
            <div key={c} className={"w-[54px] shrink-0 border-r border-[#474747] text-center " + (c === "AB" ? "border-b-2 border-b-[#217346] bg-[#6a6a6a] text-white" : "")}>{c}</div>
          ))}
        </div>
        <div className="flex h-[743px] flex-col overflow-hidden bg-white text-[11.250px] text-black">
          {Array.from({ length: 44 }, (_, i) => <SheetRow key={i} n={i + 1} />)}
        </div>
        <PlanPicture />
        <div className="absolute top-[456px] left-[1515px] h-5 w-[57px] border-2 border-[#217346]" />
        <div className="absolute top-[471px] left-[1567px] size-[7px] border border-white bg-[#217346]" />
      </div>
      <div className="mt-px ml-[3px] flex w-[15px] flex-col items-center rounded-full bg-[#141414] pt-[4px] pb-px">
        <svg width="9" height="8"><path d="M4.500 0L9 8H0z" fill="#9b9b9b" /></svg>
        <div className="mt-[5px] w-[9px] flex-1 rounded-full bg-[#9b9b9b]" />
        <svg width="9" height="8" className="mt-[9px]"><path d="M4.500 8L9 0H0z" fill="#9b9b9b" /></svg>
      </div>
    </div>
  );
}

function SheetTabs() {
  return (
    <div className="flex h-8 shrink-0 items-center">
      <Icon w={6} h={10} className="ml-[28px]"><path d="M5.500.500L1 5l4.500 4.500" stroke="#9a9a9a" /></Icon>
      <Icon w={6} h={10} className="ml-[27px]"><path d="M.500.500L5 5 .500 9.500" stroke="#9a9a9a" /></Icon>
      <div className="ml-[49px] flex h-7 w-[116px] shrink-0 self-start justify-center rounded-b bg-white text-[13.500px] text-[#262626]">
        <span className="h-[25px] border-b-2 border-[#107c41] leading-[27px] whitespace-nowrap">Nurse Schedule</span>
      </div>
      <Sep className="ml-[3px] h-[18px]" />
      <Icon w={11} h={11} className="ml-[42px]"><path d="M5.500 0v11M0 5.500h11" /></Icon>
      <div className="ml-auto flex flex-col gap-[2px] pt-1">
        {[0, 1, 2].map((i) => <div key={i} className="size-[2px] bg-[#dcdcdc]" />)}
      </div>
      <div className="mr-[18px] ml-4 flex h-[17px] w-[729px] items-center rounded-full bg-[#141414] pr-1 pl-1">
        <svg width="7" height="9"><path d="M7 0v9L0 4.500z" fill="#9b9b9b" /></svg>
        <div className="ml-[5px] h-[9px] w-[677px] rounded-full bg-[#9b9b9b]" />
        <svg width="7" height="9" className="ml-auto"><path d="M0 0v9l7-4.500z" fill="#9b9b9b" /></svg>
      </div>
    </div>
  );
}

function StatusBar() {
  return (
    <footer className="flex h-[19px] shrink-0 items-center border-t border-[#333] bg-[#141414] pt-px text-[11px]">
      <span className="ml-[11px] w-[57px] pt-[3px]">Gereed</span>
      <Icon w={14} h={14}>
        <circle cx="6" cy="2" r="1.500" stroke="#fff" />
        <path stroke="#fff" d="M1 3.500l3.500 1.500v3l-2 5M11 3.500L7.500 5v3M4.500 5h3M5 9l-1.500 4.500M8 8l5.500 5.500M13.500 8L8 13.500" />
      </Icon>
      <span className="ml-1 pt-[2px] text-[10.440px] font-bold whitespace-nowrap">Toegankelijkheid: onderzoeken</span>
      <div className="ml-auto flex h-[17px] w-10 items-center justify-center bg-[#262626]">
        <Icon w={13} h={13}><path stroke="#fff" d="M.500.500h12v12H.500zM.500 4.500h12M.500 8.500h12M4.500.500v12M8.500.500v12" /></Icon>
      </div>
      <Icon w={14} h={13} className="ml-[13px]"><path stroke="#fff" d="M.500.500h13v12H.500zM3.500 2.500h7v8h-7zM5 4.500h4M5 6.500h4M5 8.500h4" /></Icon>
      <Icon w={14} h={13} className="ml-[26px]"><path stroke="#fff" d="M.500.500h13v12H.500zM.500 7.500h8v-7M4.500.500v7" /></Icon>
      <Icon w={8} h={9} className="ml-[19px]"><path stroke="#fff" d="M0 4.500h8" /></Icon>
      <Icon w={100} h={12} className="ml-[5px]">
        <path stroke="#9b9b9b" d="M0 6.500h100M50.500 4v5" />
        <path d="M40 1h5v11h-5z" fill="#b0b0b0" stroke="none" />
      </Icon>
      <Icon w={8} h={9} className="ml-[5px]"><path stroke="#fff" d="M0 4.500h8M4.500.500v8" /></Icon>
      <span className="mr-[6px] ml-[13px] w-[22px] pt-[2px] tracking-tight whitespace-nowrap">85%</span>
    </footer>
  );
}

export default function App() {
  return (
    <div className="h-[1079px] w-[1919px] overflow-hidden bg-black pt-[25px] font-['Open_Sans','Noto_Sans',sans-serif] text-white">
      <div className="flex h-[1029px] flex-col bg-[#0a0a0a]">
        <TitleBar />
        <Tabs />
        <Ribbon />
        <FormulaBar />
        <Sheet />
        <SheetTabs />
        <StatusBar />
      </div>
    </div>
  );
}
